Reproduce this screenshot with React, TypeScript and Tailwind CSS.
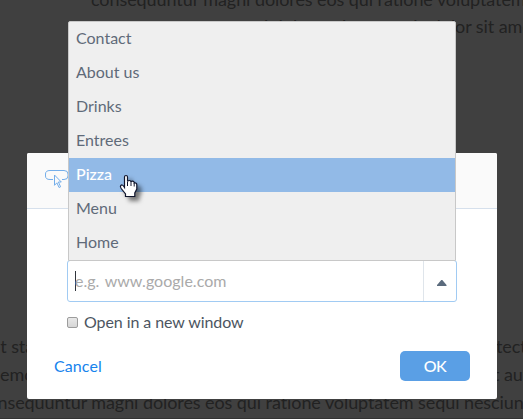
import React, { useState } from 'react';

type Line = { text: string; className: string };

// Page copy that shows through behind the dimmed overlay
const pageLines: Line[] = [
    { text: 'consequuntur magni dolores eos qui ratione voluptatem', className: 'left-[91px] -top-[15px]' },
    { text: 'qui dolorem ipsum quia dolor sit amet', className: '-right-[15px] top-[12px]' },
    { text: 'it sta', className: '-left-[4px] top-[332px]' },
    { text: 'tect', className: 'left-[496px] top-[332px]' },
    { text: 'emo', className: 'left-0 top-[360px]' },
    { text: 't aut', className: 'left-[493px] top-[360px]' },
    { text: 'consequuntur magni dolores eos qui ratione voluptatem sequi nesciunt', className: '-left-[21px] top-[388px]' },
];

const pages = ['Contact', 'About us', 'Drinks', 'Entrees', 'Pizza', 'Menu', 'Home'];

function ButtonIcon() {
    return (
        <svg width="26" height="20" viewBox="0 0 26 20" fill="none" stroke="#74aeea">
            <path d="M9 10.5H6Q1.5 10.5 1.5 7V5Q1.5 1.5 6 1.5H20Q24 1.5 24 5V7Q24 10.5 20 10.5H18" />
            <path d="M10.5 6V16.3L12.9 13.8L15 18.5L16.6 17.8L14.4 13H17.3Z" fill="#fafafa" />
        </svg>
    );
}

function HandCursor() {
    return (
        <svg
            width="20"
            height="24"
            viewBox="0 0 20 24"
            className="pointer-events-none absolute left-[119px] top-[174px] drop-shadow-[4px_4px_2px_rgba(0,0,0,0.5)]"
        >
            <path
                d="M5.5 13V3Q5.5 1.5 7 1.5T8.5 3V7.5Q8.5 6.5 10.2 6.5T12 8Q12 7.2 13.6 7.2T15.2 9Q17.8 8.5 17.8 10.7V15L15.8 19V22.5H6.5V20L2.2 14.5Q.8 12.5 1.8 11.5Q3.2 10.2 4.5 12L5.5 13.5Z"
                fill="white"
                stroke="#10152c"
                strokeWidth="1.2"
            />
            <path d="M8.5 7.5V12M12 8V12M15.2 9V12.5" stroke="#10152c" />
        </svg>
    );
}

export default function App() {
    const [active, setActive] = useState('Pizza');

    return (
        <div className="relative h-[419px] w-[523px] overflow-hidden bg-[#404040] font-[Lato,sans-serif] text-base text-[#5f6a79]">
            {pageLines.map((line, i) => (
                <span
                    key={i}
                    className={`absolute whitespace-nowrap text-[18px] leading-7 tracking-[-0.08px] text-[#222] ${line.className}`}
                >
                    {line.text}
                </span>
            ))}
            <div className="absolute inset-x-0 bottom-0 h-px bg-[#333]" />

            <div className="absolute left-[27px] top-[153px] flex h-[246px] w-[470px] flex-col rounded-[2px] bg-white">
                <div className="flex h-14 shrink-0 items-start rounded-t-[2px] border-b border-[#d6e0ec] bg-[#fafafa] pl-[17px] pt-4">
                    <ButtonIcon />
                </div>
                <div className="flex flex-1 flex-col px-10 pt-[51px]">
                    <div className="flex h-[42px] w-[390px] rounded-[3px] border border-[#a1cbf3]">
                        <div className="flex flex-1 items-center pl-[7px]">
                            <span className="h-5 w-px bg-[#30343c]" />
                            <span className="-ml-px -mt-px tracking-[0.02px] text-[#aaa] [word-spacing:1.5px]">e.g. www.google.com</span>
                        </div>
                        <div className="flex w-[33px] items-center justify-center border-l border-[#dfe5eb] pl-[3px] pt-1">
                            <svg width="10" height="6" viewBox="0 0 10 6" fill="#5b6b7d">
                                <path d="M0 5L4.3 0H5.3L9.5 5V6H0Z" />
                            </svg>
                        </div>
                    </div>
                    <label className="mt-2 flex h-6 items-center text-[#4c5561]">
                        <span className="mr-[6px] mt-px h-[11px] w-[11px] rounded-[2px] border border-[#9c9c9c] bg-linear-to-b from-[#e8e8e8] to-[#d6d6d6]" />
                        <span className="-mt-px tracking-[-0.08px]">Open in a new window</span>
                    </label>
                </div>
                <div className="flex h-12 shrink-0 items-start justify-between pl-[27px] pr-[27px]">
                    <button className="h-[30px] pb-px tracking-[0.1px] text-[#1683ed]">Cancel</button>
                    <button className="h-[30px] w-[70px] rounded-[5px] bg-[#5a9fe5] pb-px font-medium tracking-[-0.6px] text-white">OK</button>
                </div>
            </div>

            <ul className="absolute left-[68px] top-[21px] h-[240px] w-[388px] rounded-t-[2px] border border-[#c8c8c8] bg-[#efefef]">
                {pages.map((page) => (
                    <li
                        key={page}
                        onMouseEnter={() => setActive(page)}
                        className={`flex h-[34px] items-center pb-[2px] pl-[7px] ${active === page ? 'bg-[#92bae7] font-medium text-white' : ''}`}
                    >
                        {page}
                    </li>
                ))}
            </ul>
            <HandCursor />
        </div>
    );
}
